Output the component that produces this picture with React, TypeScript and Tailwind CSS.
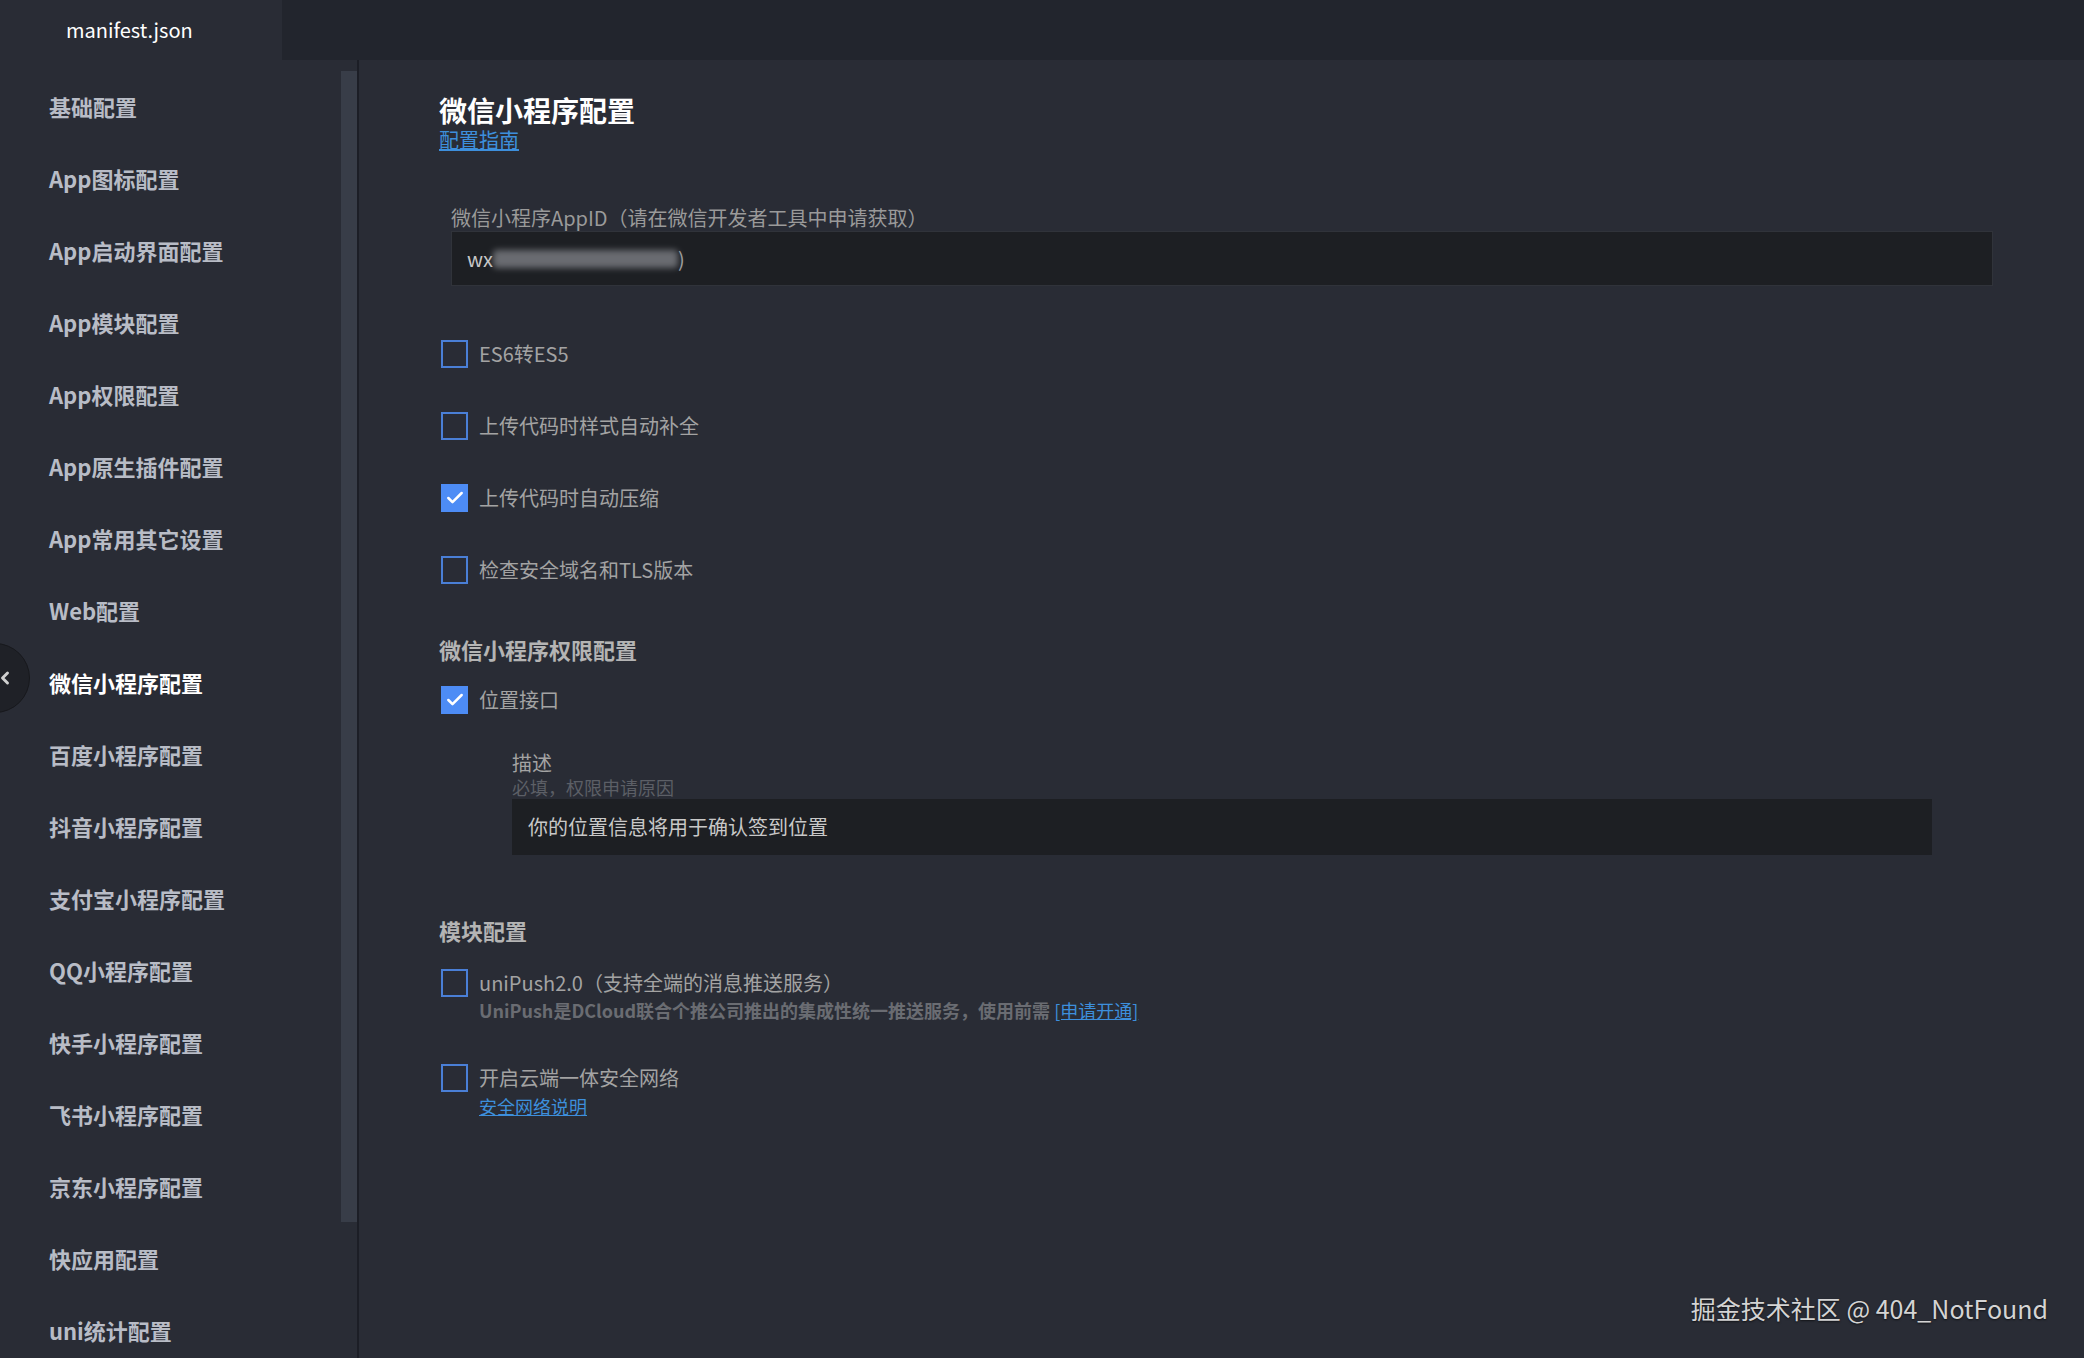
import { Check, ChevronLeft } from 'lucide-react';

const menu = [
  '基础配置',
  'App图标配置',
  'App启动界面配置',
  'App模块配置',
  'App权限配置',
  'App原生插件配置',
  'App常用其它设置',
  'Web配置',
  '微信小程序配置',
  '百度小程序配置',
  '抖音小程序配置',
  '支付宝小程序配置',
  'QQ小程序配置',
  '快手小程序配置',
  '飞书小程序配置',
  '京东小程序配置',
  '快应用配置',
  'uni统计配置',
];

function Box({ checked }: { checked?: boolean }) {
  return checked ? (
    <div className="w-[27px] h-[28px] shrink-0 bg-[#4d8cf5] flex items-center justify-center">
      <Check className="w-[20px] h-[20px] text-white" strokeWidth={3} />
    </div>
  ) : (
    <div className="w-[27px] h-[28px] shrink-0 border-2 border-[#4a7fd6]" />
  );
}

function Row({ label, checked }: { label: string; checked?: boolean }) {
  return (
    <div className="h-[72px] flex items-center gap-[11px] pl-[2px]">
      <Box checked={checked} />
      <span className="text-[20px] text-[#a3a3a3]">{label}</span>
    </div>
  );
}

export default function App() {
  return (
    <div
      className="w-[2084px] h-[1358px] bg-[#292c35] flex flex-col overflow-hidden relative"
      style={{ fontFamily: '"Noto Sans CJK SC", "Noto Sans", sans-serif' }}
    >
      {/* tab bar */}
      <div className="h-[60px] bg-[#22252d] flex shrink-0">
        <div className="w-[282px] bg-[#292c35] flex items-center pl-[66px] text-[20px] text-white">
          manifest.json
        </div>
      </div>

      <div className="flex flex-1 min-h-0">
        {/* sidebar */}
        <div className="w-[341px] pt-[10px] flex flex-col">
          {menu.map((m) => (
            <div
              key={m}
              className={
                m === '微信小程序配置'
                  ? 'h-[72px] shrink-0 flex items-center pl-[49px] text-[22px] font-bold text-white'
                  : 'h-[72px] shrink-0 flex items-center pl-[49px] text-[22px] font-bold text-[#b8bcc6]'
              }
            >
              {m}
            </div>
          ))}
        </div>
        <div className="w-[16px] pt-[11px]">
          <div className="h-[1151px] bg-[#383d48]" />
        </div>
        <div className="w-[2px] bg-[#1c1e26]" />

        {/* main */}
        <div className="flex-1 pl-[80px] pt-[34px] flex flex-col">
          <div className="text-[28px] leading-[32px] font-bold text-white">微信小程序配置</div>
          <a className="mt-[1px] text-[20px] leading-[26px] text-[#3d8fdc] underline w-fit">配置指南</a>

          <div className="ml-[12px] mt-[52px] text-[20px] leading-[26px] text-[#9a9a9a]">
            微信小程序AppID（请在微信开发者工具中申请获取）
          </div>
          <div className="ml-[12px] w-[1542px] h-[55px] bg-[#1d1f23] border border-[#30333a] flex items-center pl-[15px] text-[20px] text-[#c8c8c8]">
            wx
            <span className="inline-block w-[185px] h-[18px] bg-[#8a8c92] blur-[3px] opacity-70 rounded-sm" />
            <span className="text-[#a0a0a0]">)</span>
          </div>

          <div className="mt-[32px]">
            <Row label="ES6转ES5" />
            <Row label="上传代码时样式自动补全" />
            <Row label="上传代码时自动压缩" checked />
            <Row label="检查安全域名和TLS版本" />
          </div>

          <div className="mt-[28px] text-[22px] leading-[30px] font-bold text-[#b4b4b4]">微信小程序权限配置</div>
          <div className="mt-[16px] h-[40px] flex items-center gap-[11px] pl-[2px]">
            <Box checked />
            <span className="text-[20px] text-[#a3a3a3]">位置接口</span>
          </div>

          <div className="ml-[73px] mt-[30px] flex flex-col">
            <div className="text-[20px] leading-[26px] text-[#a3a3a3]">描述</div>
            <div className="text-[18px] leading-[22px] text-[#5c5f66]">必填，权限申请原因</div>
            <div className="mt-[1px] w-[1420px] h-[56px] bg-[#1d1f23] flex items-center pl-[16px] text-[20px] text-[#c8c8c8]">
              你的位置信息将用于确认签到位置
            </div>
          </div>

          <div className="mt-[60px] text-[22px] leading-[30px] font-bold text-[#b4b4b4]">模块配置</div>

          <div className="mt-[24px] h-[28px] flex items-center gap-[11px] pl-[2px]">
            <Box />
            <span className="text-[20px] text-[#a3a3a3]">uniPush2.0（支持全端的消息推送服务）</span>
          </div>
          <div className="mt-[1px] pl-[40px] text-[18px] leading-[24px] font-bold text-[#6a6c72]">
            UniPush是DCloud联合个推公司推出的集成性统一推送服务，使用前需{' '}
            <a className="font-normal text-[#3d8fdc] underline">[申请开通]</a>
          </div>

          <div className="mt-[42px] h-[28px] flex items-center gap-[11px] pl-[2px]">
            <Box />
            <span className="text-[20px] text-[#a3a3a3]">开启云端一体安全网络</span>
          </div>
          <a className="mt-[2px] ml-[40px] text-[18px] leading-[24px] text-[#3d8fdc] underline w-fit">安全网络说明</a>
        </div>
      </div>

      {/* collapse button */}
      <div className="absolute left-[-40px] top-[643px] w-[70px] h-[70px] rounded-full bg-[#1f2127] border border-[#17181c] flex items-center justify-end pr-[14px]">
        <ChevronLeft className="w-[20px] h-[20px] text-[#d0d0d0]" strokeWidth={3.5} />
      </div>

      {/* watermark */}
      <div className="absolute right-[36px] bottom-[31px] text-[25px] text-[#d4d4d4] [text-shadow:0_1px_2px_rgba(0,0,0,0.6)]">
        掘金技术社区 @ 404_NotFound
      </div>
    </div>
  );
}
